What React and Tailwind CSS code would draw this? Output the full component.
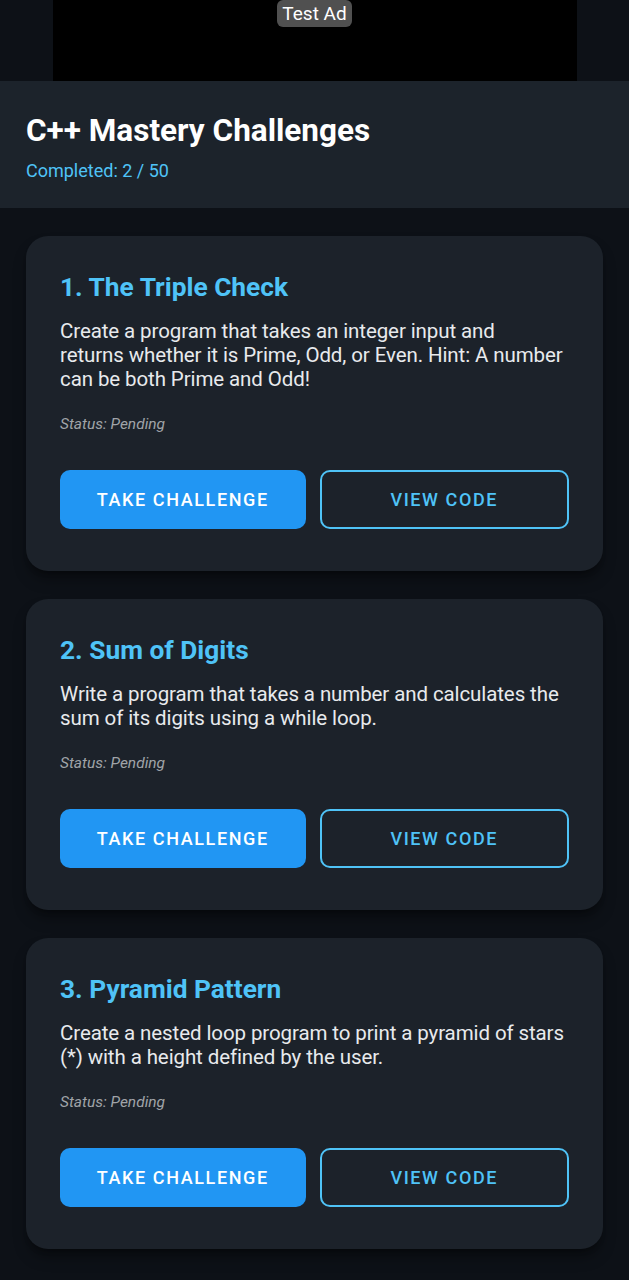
const challenges = [
  {
    title: '1. The Triple Check',
    desc: 'Create a program that takes an integer input and returns\u00a0whether it is Prime, Odd, or Even. Hint: A number can be both Prime and Odd!',
  },
  {
    title: '2. Sum of Digits',
    desc: 'Write a program that takes a number and calculates the sum of its digits using a while loop.',
  },
  {
    title: '3. Pyramid Pattern',
    desc: 'Create a nested loop program to print a pyramid of stars (*) with a height defined by the user.',
  },
]

function ChallengeCard({ title, desc }) {
  return (
    <div className="bg-[#1c222a] rounded-[22px] pl-[34px] pr-[30px] pt-[36px] pb-[42px] shadow-lg shadow-black/40">
      <h2 className="text-[26.3px] leading-[30px] font-bold text-[#4fc3f7]">{title}</h2>
      <p className="mt-[17px] text-[20.5px] leading-[24px] tracking-[-0.1px] text-[#e8eaed]">{desc}</p>
      <p className="mt-[23px] text-[15.5px] leading-[20px] italic text-[#a0a4a8]">Status: Pending</p>
      <div className="mt-[36px] mr-[4px] flex gap-[14px]">
        <button className="flex-1 h-[59px] rounded-[10px] bg-[#2196f3] text-white text-[18px] font-medium tracking-[1.6px]">
          TAKE CHALLENGE
        </button>
        <button className="flex-1 h-[59px] rounded-[10px] border-2 border-[#4fc3f7] text-[#4fc3f7] text-[18px] font-medium tracking-[1.6px]">
          VIEW CODE
        </button>
      </div>
    </div>
  )
}

export default function App() {
  return (
    <div className="min-h-screen bg-[#0d1117] font-['Roboto',sans-serif]">
      {/* ad banner */}
      <div className="flex justify-center">
        <div className="w-[524px] h-[81px] bg-black flex justify-center">
          <span className="h-[27px] px-[5px] bg-[#505050] rounded-[6px] text-white text-[19px] leading-[27px]">
            Test Ad
          </span>
        </div>
      </div>

      {/* header */}
      <div className="bg-[#1c232b] px-[26px] pt-[34px] pb-[26px]">
        <h1 className="text-[31.5px] leading-[32px] font-bold text-white">C++ Mastery Challenges</h1>
        <p className="mt-[13px] text-[18px] leading-[22px] text-[#4fc3f7]">Completed: 2 / 50</p>
      </div>

      <div className="px-[26px] pt-[28px] pb-[28px] flex flex-col gap-[28px]">
        {challenges.map((c) => (
          <ChallengeCard key={c.title} {...c} />
        ))}
      </div>
    </div>
  )
}
